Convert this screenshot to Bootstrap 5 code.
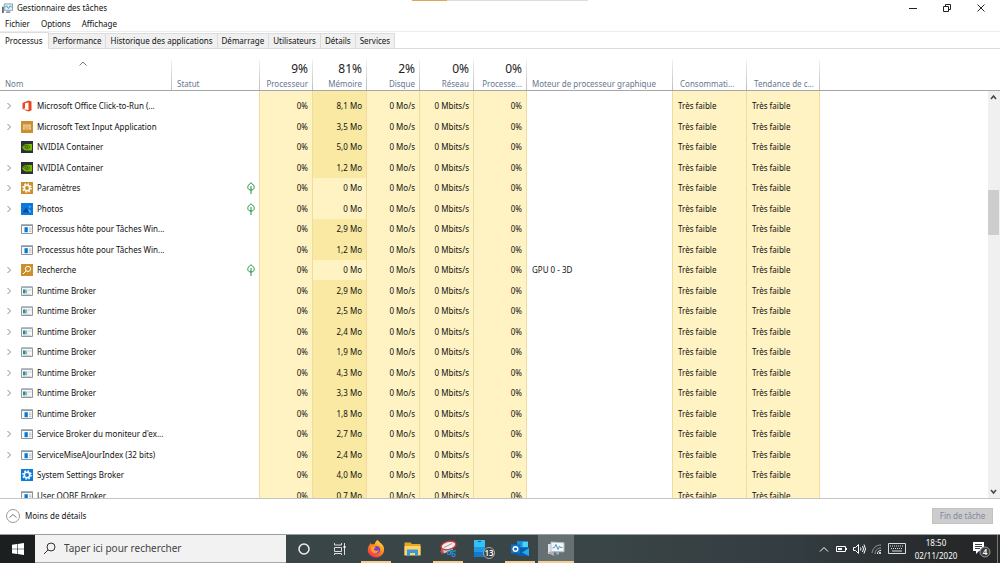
<!DOCTYPE html>
<html lang="fr">
<head>
<meta charset="utf-8">
<meta name="viewport" content="width=device-width, initial-scale=1">
<title>Gestionnaire des tâches</title>
<link rel="stylesheet" href="https://cdn.jsdelivr.net/npm/bootstrap@5.3.0/dist/css/bootstrap.min.css">
<style>
body{font:8px/14px "Noto Sans","Open Sans",sans-serif;color:#111;background:#fff}
svg{display:block;flex:none}
button,input{font:inherit;color:inherit}
.plain{border:0;background:none;padding:0}
.titlebar{height:17px;padding:0 2px}
.winbtn{width:34px;height:15px}
.loadline{position:absolute;top:0;left:41.2%;width:17.6%;height:1px;background:#ddd}
.loadline i{display:block;width:20%;height:1px;background:#d9a85c}
.menubar{height:15px;border-bottom:1px solid #ececec;padding-left:5px;gap:11px}
.menubar a{color:#111;text-decoration:none}
.tabbar{height:18px;border-bottom:1px solid #dcdcdc}
.tabbtn{height:15px;padding:0 4px;border:1px solid #dcdcdc;border-left:0;border-bottom:0;background:#f0f0f0;color:#111;line-height:14px;border-radius:0}
.tabbtn.active{height:17px;background:#fff;margin-bottom:-1px;padding:0 5px;line-height:13px;border-bottom:1px solid #fff}
.sheet{padding-top:11px}
.proc{table-layout:fixed;width:100%;border-collapse:separate;border-spacing:0}
.proc th{font-weight:400;height:31px;padding:0 4px 0 5px;color:#66788f;border:0;vertical-align:bottom;white-space:nowrap;position:relative;background:linear-gradient(#a6a6a6,#a6a6a6) bottom/100% 1px no-repeat,linear-gradient(#f0f0f0,#bdbdbd) right/1px 100% no-repeat;border-right:1px solid transparent;background-origin:border-box}
.proc th.rest{background:linear-gradient(#a6a6a6,#a6a6a6) bottom/100% 1px no-repeat;border-right:0}
.proc th.wide{padding-left:7px}
.proc th b{display:block;font-weight:400;font-size:12px;line-height:16px;color:#222}
.proc td{height:20px;padding:0 4px 0 5px;white-space:nowrap;border-right:1px solid transparent;overflow:hidden}
.proc tbody tr:nth-child(even) td{height:21px}
.proc tbody tr:first-child td{height:25px;padding-top:4px}
.proc .edge{border-right-color:#f0dc9f}
.proc .heat{background:#fff2c3;border-right-color:#f0dc9f}
.proc .hot{background:#f9e9a2}
.proc .nm{padding:0 0 0 5px}
.proc .cell{gap:4px}
.proc .tw{width:12px}
.sort{position:absolute;left:79px;top:1px}
.side{width:12px}
.side .cap{height:31px;border-bottom:1px solid #a6a6a6}
.track{background:#f0f0f0}
.track button{height:12px}
.before{flex:86 0 0}.after{flex:251 0 0}
.thumb{height:45px;background:#cdcdcd;margin-right:1px}
.foot{height:36px;border-top:1px solid #c4c4c4;padding:0 7px 0 5px}
.endbtn{background:#ccc;border:1px solid #c2c2c2;color:#8288a2;height:16px;width:61px;line-height:14px;padding:0}
.taskbar{height:30px;background:linear-gradient(90deg,#3a4548 60%,#333c40 80%,#252728 96%);border-top:1px solid #9a9fa0;color:#fff}
.start{width:35px;background:#1b1f20}
.searchbox{width:251px;background:#f2f2f2;color:#444;border-bottom:1px solid #aaa;padding-left:8px;gap:8px}
.searchbox input{font-size:10px;outline:0}
.searchbox input::placeholder{color:#444;opacity:1}
.app{width:36px}
.app.run{background:linear-gradient(#f7cd94,#f7cd94) bottom/30px 2px no-repeat}
.app.now{background:linear-gradient(#f7cd94,#f7cd94) bottom/100% 2px no-repeat #667073}
.tray{gap:5px;padding-right:2px}
.clock{width:50px;line-height:13px}
.notif{width:32px;border-right:1px solid #777}
</style>
</head>
<body class="vh-100 d-flex flex-column overflow-hidden">
<svg class="d-none" aria-hidden="true">
<symbol id="i-office" viewBox="0 0 12 12"><path fill="#e8461e" d="M1.500 3 7.500.5l3 .9v9.100l-3 1L1.500 9.200l6 .9V2.400L4 3.200v5L1.500 9.200z"/></symbol>
<symbol id="i-input" viewBox="0 0 12 12"><path fill="#cc8f2c" d="M0 0h12v12H0z"/><path fill="#ecd2a0" d="M2 3.500h8v5H2z"/><path stroke="#c28a30" stroke-width=".7" stroke-dasharray="1 .6" d="M2.600 5h7M2.600 6.300h7M3.500 7.500h5"/></symbol>
<symbol id="i-nvidia" viewBox="0 0 12 12"><path fill="#2b3038" d="M0 0h12v12H0z"/><path fill="#76b900" d="M5 3h6v6.500H5C3 9 1.500 7.500 1 6c1-1.600 2.300-2.600 4-3z"/><path fill="none" stroke="#26331c" stroke-width=".6" d="M2 6c2-2.500 5-2.500 7 0-1.500 2-4 2.500-5.500 0C5 4.500 6.500 5 7 6c-.7 1-1.500.8-2 .2"/></symbol>
<symbol id="i-gear" viewBox="0 0 12 12"><circle cx="6" cy="6" r="2.700" fill="none" stroke="#fff" stroke-width="1.500"/><circle cx="6" cy="6" r="4" fill="none" stroke="#fff" stroke-width="1.600" stroke-dasharray="1.570 1.570"/></symbol>
<symbol id="i-param" viewBox="0 0 12 12"><path fill="#cc8f2c" d="M0 0h12v12H0z"/><use href="#i-gear"/></symbol>
<symbol id="i-sys" viewBox="0 0 12 12"><path fill="#0c7cdc" d="M0 0h12v12H0z"/><use href="#i-gear"/></symbol>
<symbol id="i-photos" viewBox="0 0 12 12"><path fill="#0a78dc" d="M0 0h12v12H0z"/><path fill="#0a4c9c" d="m1.500 9.500 3.500-5 2 2.500 1.200-1 2.500 3.500z"/><path fill="#6fc0ff" d="m7 7 1.200-1 2.300 3.500H8.500zM8 3h1.500v1.400H8z"/></symbol>
<symbol id="i-win" viewBox="0 0 12 12"><path fill="#fafafa" stroke="#8e979f" d="M.5 2h11v8.500H.5z"/><path fill="#8e979f" d="M0 1.500h12V3H0z"/><path fill="#0878d0" d="M3.500 4.200h3.300v5H3.500z"/><path stroke="#9eb4c4" stroke-width=".8" d="M8 5h2.500M8 6.700h2.500M8 8.400h2.500"/></symbol>
<symbol id="i-run" viewBox="0 0 12 12"><path fill="#f6f6f6" stroke="#8e979f" d="M.5 2h11v8.500H.5z"/><path fill="#a4adb4" d="M0 1.500h12V3H0z"/><path fill="#2e8a82" d="M2 4.500h2.600v3.800H2z"/><path fill="#7dbbd0" d="M4.600 4.500h1.600v3.800H4.600z"/><path stroke="#c0c8cc" stroke-width=".8" d="M7 5h3.500M2 9.400h8"/></symbol>
<symbol id="i-find" viewBox="0 0 12 12"><path fill="#cc8f2c" d="M0 0h12v12H0z"/><path fill="none" stroke="#fff" d="M5.200 6.800 2 10"/><circle cx="7" cy="4.900" r="2.600" fill="none" stroke="#fff"/></symbol>
<symbol id="i-leaf" viewBox="0 0 8 12"><path fill="none" stroke="#23923c" d="M4 .8C1.600 2.500.6 4 .8 5.600 1 7.300 2.200 8 4 8s3-.7 3.200-2.400C7.400 4 6.400 2.500 4 .8zM4 4v8"/></symbol>
<symbol id="i-tw" viewBox="0 0 8 8"><path fill="none" stroke="#8a8a8a" d="M2.500 1 5.500 4 2.500 7"/></symbol>
<symbol id="i-tm" viewBox="0 0 20 16"><path fill="#dfe3e5" d="M2 3h5v10H2z"/><path fill="#abb3b8" d="m8 12 5-1v2.500l-5 1zM1 11.500l6 3 5-1-6-3z"/><path fill="#f3f6f8" stroke="#b5bec4" d="m5 1 13 .8v9L5 10.500z"/><path fill="none" stroke="#4d9ac8" d="m6.500 7 2-.5L10 3.500l2 5L13.500 5l1 1.500h2"/></symbol>
</svg>

<header class="titlebar d-flex align-items-center position-relative">
  <div class="loadline"><i></i></div>
  <svg class="me-1" width="11" height="11" viewBox="0 0 12 12"><path fill="#667" d="M0 4h2v7H0z"/><path fill="#e5f3fa" stroke="#8b98a3" d="M2.500 1h9v7h-9z"/><path fill="none" stroke="#2994bd" d="m3 5 2-2 2 3 2-3 2 2"/><path fill="#8b98a3" d="M5 9h4v2H4z"/></svg>
  <span>Gestionnaire des tâches</span>
  <button class="plain winbtn ms-auto" aria-label="Réduire"><svg class="mx-auto" width="8" height="8"><path stroke="#222" d="M0 4.500h8"/></svg></button>
  <button class="plain winbtn" aria-label="Restaurer"><svg class="mx-auto" width="8" height="8"><path fill="none" stroke="#222" d="M.5 2.500h5v5h-5zM2.500 2V.500h5v5H6"/></svg></button>
  <button class="plain winbtn" aria-label="Fermer"><svg class="mx-auto" width="8" height="8"><path stroke="#222" d="m.5.5 7 7m0-7-7 7"/></svg></button>
</header>
<nav class="menubar d-flex align-items-center"><a href="#">Fichier</a><a href="#">Options</a><a href="#">Affichage</a></nav>
<div class="tabbar d-flex align-items-end" role="tablist">
  <button class="tabbtn active" role="tab">Processus</button><button class="tabbtn" role="tab">Performance</button><button class="tabbtn" role="tab">Historique des applications</button><button class="tabbtn" role="tab">Démarrage</button><button class="tabbtn" role="tab">Utilisateurs</button><button class="tabbtn" role="tab">Détails</button><button class="tabbtn" role="tab">Services</button>
</div>

<main class="sheet d-flex flex-fill overflow-hidden">
  <div class="flex-fill overflow-hidden">
  <table class="proc">
    <colgroup><col style="width:172px"><col style="width:88px"><col style="width:53px"><col style="width:54px"><col style="width:53px"><col style="width:54px"><col style="width:53px"><col style="width:146px"><col style="width:74px"><col style="width:73px"><col></colgroup>
    <thead><tr>
      <th><svg class="sort" width="8" height="5"><path fill="none" stroke="#777" d="M.5 4.500 4 1l3.500 3.500"/></svg>Nom</th>
      <th>Statut</th>
      <th class="text-end"><b>9%</b>Processeur</th>
      <th class="text-end"><b>81%</b>Mémoire</th>
      <th class="text-end"><b>2%</b>Disque</th>
      <th class="text-end"><b>0%</b>Réseau</th>
      <th class="text-end"><b>0%</b>Processe...</th>
      <th>Moteur de processeur graphique</th>
      <th class="wide">Consommati...</th>
      <th class="wide">Tendance de c...</th>
      <th class="rest"></th>
    </tr></thead>
    <tbody id="rows"></tbody>
  </table>
  </div>
  <div class="side d-flex flex-column flex-shrink-0">
    <div class="cap"></div>
    <div class="track flex-fill d-flex flex-column">
      <button class="plain" aria-label="Défiler vers le haut"><svg class="mx-auto" width="8" height="6"><path fill="none" stroke="#444" stroke-width="1.500" d="M1 5l2.500-3L6 5"/></svg></button>
      <div class="before"></div><div class="thumb"></div><div class="after"></div>
      <button class="plain" aria-label="Défiler vers le bas"><svg class="mx-auto" width="8" height="6"><path fill="none" stroke="#444" stroke-width="1.500" d="M1 1l2.500 3L6 1"/></svg></button>
    </div>
  </div>
</main>

<footer class="foot d-flex align-items-center justify-content-between">
  <button class="plain d-flex align-items-center gap-1"><svg width="16" height="16"><circle cx="8" cy="8" r="6.500" fill="none" stroke="#999"/><path fill="none" stroke="#777" d="m4.500 9.500 3.500-3 3.500 3"/></svg>Moins de détails</button>
  <button class="endbtn" disabled>Fin de tâche</button>
</footer>

<div class="taskbar d-flex align-items-stretch">
  <button class="plain start" aria-label="Démarrer"><svg class="mx-auto" width="12" height="12" viewBox="0 0 12 12"><path fill="#fff" d="m0 1.700 5-.7v4.700H0zM5.600.9 12 0v5.700H5.600zM0 6.300h5V11l-5-.7zM5.600 6.300H12V12l-6.400-.9z"/></svg></button>
  <label class="searchbox d-flex align-items-center"><svg width="13" height="13"><circle cx="8" cy="5" r="4" fill="none" stroke="#333"/><path stroke="#333" d="M5 8 1 12"/></svg><input class="plain flex-fill" type="text" placeholder="Taper ici pour rechercher" aria-label="Rechercher"></label>
  <button class="plain app" aria-label="Cortana"><svg class="mx-auto" width="14" height="14"><circle cx="7" cy="7" r="5" fill="none" stroke="#eee" stroke-width="1.500"/></svg></button>
  <button class="plain app" aria-label="Affichage des tâches"><svg class="mx-auto" width="14" height="14"><path fill="none" stroke="#ddd" d="M1.500 1v2h7V1M1.500 5.500h7v4h-7zM1.500 13v-1.500h7V13M11.500 1v12"/><path fill="#fff" d="M10.500 4h2v2h-2z"/></svg></button>
  <button class="plain app run" aria-label="Firefox"><svg class="mx-auto" width="18" height="18" viewBox="0 0 18 18"><defs><linearGradient id="ff" x1=".8" y1="0" x2=".2" y2="1"><stop stop-color="#ffe23c"/><stop offset=".45" stop-color="#ff8a1e"/><stop offset="1" stop-color="#f0285a"/></linearGradient></defs><path fill="url(#ff)" d="M10.500 0c1 1.200 2 2 3.500 3.300C16.500 5.500 17.500 8 17 11c-.8 4-4 6.500-8 6.500S1 14.500.8 10.500C.7 8 1.700 6 2.800 4.600L3 3l1.700 1.500C6 4 7 4.200 7.500 4.500 8 2.500 9 1 10.500 0z"/><circle cx="9.300" cy="9.800" r="3.800" fill="#7440c8"/><path fill="#ff9b26" d="M4 7c2-1.300 4-1 5 .5-1 .3-2 .8-2 1.800 1 2 3.500 1.500 5 1-1 3-5 4-7 1.500C3.800 10.300 3.500 8.500 4 7z"/></svg></button>
  <button class="plain app" aria-label="Explorateur de fichiers"><svg class="mx-auto" width="17" height="16" viewBox="0 0 17 16"><path fill="#e8a522" d="M.5 1.500h6L8 3h8.500v11H.5z"/><path fill="#ffd567" d="M.5 5h16v9.500H.5z"/><path fill="#3c98dc" d="M3 8.500h11v6.500h-3v-3H6v3H3z"/></svg></button>
  <button class="plain app run" aria-label="Outil Capture"><svg class="mx-auto" width="18" height="18" viewBox="0 0 18 18"><path fill="#c8ccd4" d="m2 9.500 9-1 2-1 1 2-9 4z"/><ellipse cx="9.500" cy="5.500" rx="7.500" ry="4" fill="#f5eeee" stroke="#d83a3a" stroke-width="1.400" transform="rotate(-14 9.500 5.500)"/><path stroke="#999" d="M5 7.500 13 3.500"/><path fill="#d94742" d="m1 11 3-1 1 3-2 1z"/><g fill="none" stroke="#2689c8" stroke-width="1.400"><path d="m10.500 9 3 5m3.500-3.500L11.500 12"/><circle cx="10" cy="13" r="1.600"/><circle cx="14.500" cy="15" r="1.600"/></g></svg></button>
  <button class="plain app" aria-label="Votre téléphone, 13 notifications"><svg class="mx-auto" width="26" height="20" viewBox="0 0 26 20"><path fill="#1479cc" d="M3 1h11v17H3z"/><path fill="#35c1f1" d="M3 1h11v9H3z"/><path fill="#1c9be2" d="M3 8h11v5H3z"/><path stroke="#125a96" d="M7 2.500h3"/><circle cx="18" cy="14" r="5.500" fill="#3a4245" stroke="#aaa"/><text x="18" y="17" font-size="8" font-weight="600" text-anchor="middle" fill="#fff">13</text></svg></button>
  <button class="plain app run" aria-label="Outlook"><svg class="mx-auto" width="18" height="16" viewBox="0 0 18 16"><path fill="#1490df" d="M6 0h11v9H6z"/><path fill="#50d0f5" d="M11.500 1H17v5h-5.500z"/><path fill="#0a5dad" d="M6 6.500h12V15H6z"/><path fill="#28a8ea" d="m18 7-7 4.500 7 3.500z"/><path fill="#0f70c8" d="M0 3.500h9v9H0z"/><circle cx="4.500" cy="8" r="2.300" fill="none" stroke="#fff" stroke-width="1.400"/></svg></button>
  <button class="plain app now" aria-label="Gestionnaire des tâches"><svg class="mx-auto" width="20" height="16"><use href="#i-tm"/></svg></button>
  <div class="tray d-flex align-items-center ms-auto">
    <svg width="12" height="10"><path fill="none" stroke="#fff" d="M2 7.500 6 3.500l4 4"/></svg>
    <svg width="13" height="10"><path fill="none" stroke="#fff" d="M1.500 2.500h9v5h-9z"/><path fill="#fff" d="M3 4h4v2H3zM11 4h1v2h-1z"/></svg>
    <svg width="13" height="12"><path fill="none" stroke="#fff" d="M.5 4.500h2l3-3v9l-3-3h-2zM7.500 4.500q1 1.500 0 3M9.500 3q2 3 0 6M11 1.500q3 4.500 0 9"/></svg>
    <svg width="12" height="12"><path fill="none" stroke="#999" d="M1 10C2 5 5 2 10 2M4 11c0-3 2-6 6-6"/><path fill="none" stroke="#fff" d="M6.500 11c0-2 1-3.500 3.500-3.500"/><circle cx="9" cy="10" r="1" fill="#fff"/></svg>
    <svg width="18" height="11"><path fill="none" stroke="#ddd" d="M.5.5h17v10H.5z"/><path stroke="#ddd" stroke-dasharray="1 1" d="M2 3h14M3 5.500h12"/><path stroke="#ddd" d="M4 8h10"/></svg>
    <div class="clock text-center"><div>18:50</div><div>02/11/2020</div></div>
    <button class="plain notif align-self-stretch" aria-label="4 notifications"><svg class="mx-auto" width="22" height="18"><path fill="#fff" d="M2 2h11v9H8l-3 3v-3H2z"/><path stroke="#444" d="M4 4.500h7M4 6.500h7M4 8.500h5"/><circle cx="14" cy="12" r="5" fill="#3b3d3e" stroke="#999"/><text x="14" y="15" font-size="8" font-weight="600" text-anchor="middle" fill="#fff">4</text></svg></button>
  </div>
</div>

<script>
// name, icon, expandable, memory, suspended, gpu engine
const rows = [
  ["Microsoft Office Click-to-Run (...", "office", 1, "8,1"],
  ["Microsoft Text Input Application", "input", 1, "3,5"],
  ["NVIDIA Container", "nvidia", 0, "5,0"],
  ["NVIDIA Container", "nvidia", 1, "1,2"],
  ["Paramètres", "param", 1, "0", 1],
  ["Photos", "photos", 1, "0", 1],
  ["Processus hôte pour Tâches Win...", "win", 0, "2,9"],
  ["Processus hôte pour Tâches Win...", "win", 0, "1,2"],
  ["Recherche", "find", 1, "0", 1, "GPU 0 - 3D"],
  ["Runtime Broker", "run", 1, "2,9"],
  ["Runtime Broker", "run", 1, "2,5"],
  ["Runtime Broker", "run", 1, "2,4"],
  ["Runtime Broker", "run", 1, "1,9"],
  ["Runtime Broker", "run", 1, "4,3"],
  ["Runtime Broker", "run", 1, "3,3"],
  ["Runtime Broker", "win", 0, "1,8"],
  ["Service Broker du moniteur d'ex...", "win", 1, "2,7"],
  ["ServiceMiseAJourIndex (32 bits)", "win", 1, "2,4"],
  ["System Settings Broker", "sys", 0, "4,0"],
  ["User OOBE Broker", "win", 0, "0,7"]
];
const icon = (id, w, h) => `<svg width="${w}" height="${h}"><use href="#i-${id}"/></svg>`;
document.getElementById("rows").innerHTML = rows.map(([name, ic, open, mem, leaf, gpu]) => `<tr>
<td class="nm"><div class="cell d-flex align-items-center"><span class="tw">${open ? icon("tw", 8, 8) : ""}</span>${icon(ic, 12, 12)}<span>${name}</span></div></td>
<td class="edge">${leaf ? `<div class="d-flex justify-content-end">${icon("leaf", 8, 12)}</div>` : ""}</td>
<td class="heat text-end">0%</td><td class="heat text-end ${mem === "0" ? "" : "hot"}">${mem} Mo</td>
<td class="heat text-end">0 Mo/s</td><td class="heat text-end">0 Mbits/s</td><td class="heat text-end">0%</td>
<td class="edge">${gpu || ""}</td><td class="heat">Très faible</td><td class="heat">Très faible</td><td></td></tr>`).join("");
</script>
<script src="https://cdn.jsdelivr.net/npm/bootstrap@5.3.0/dist/js/bootstrap.bundle.min.js"></script>
</body>
</html>
